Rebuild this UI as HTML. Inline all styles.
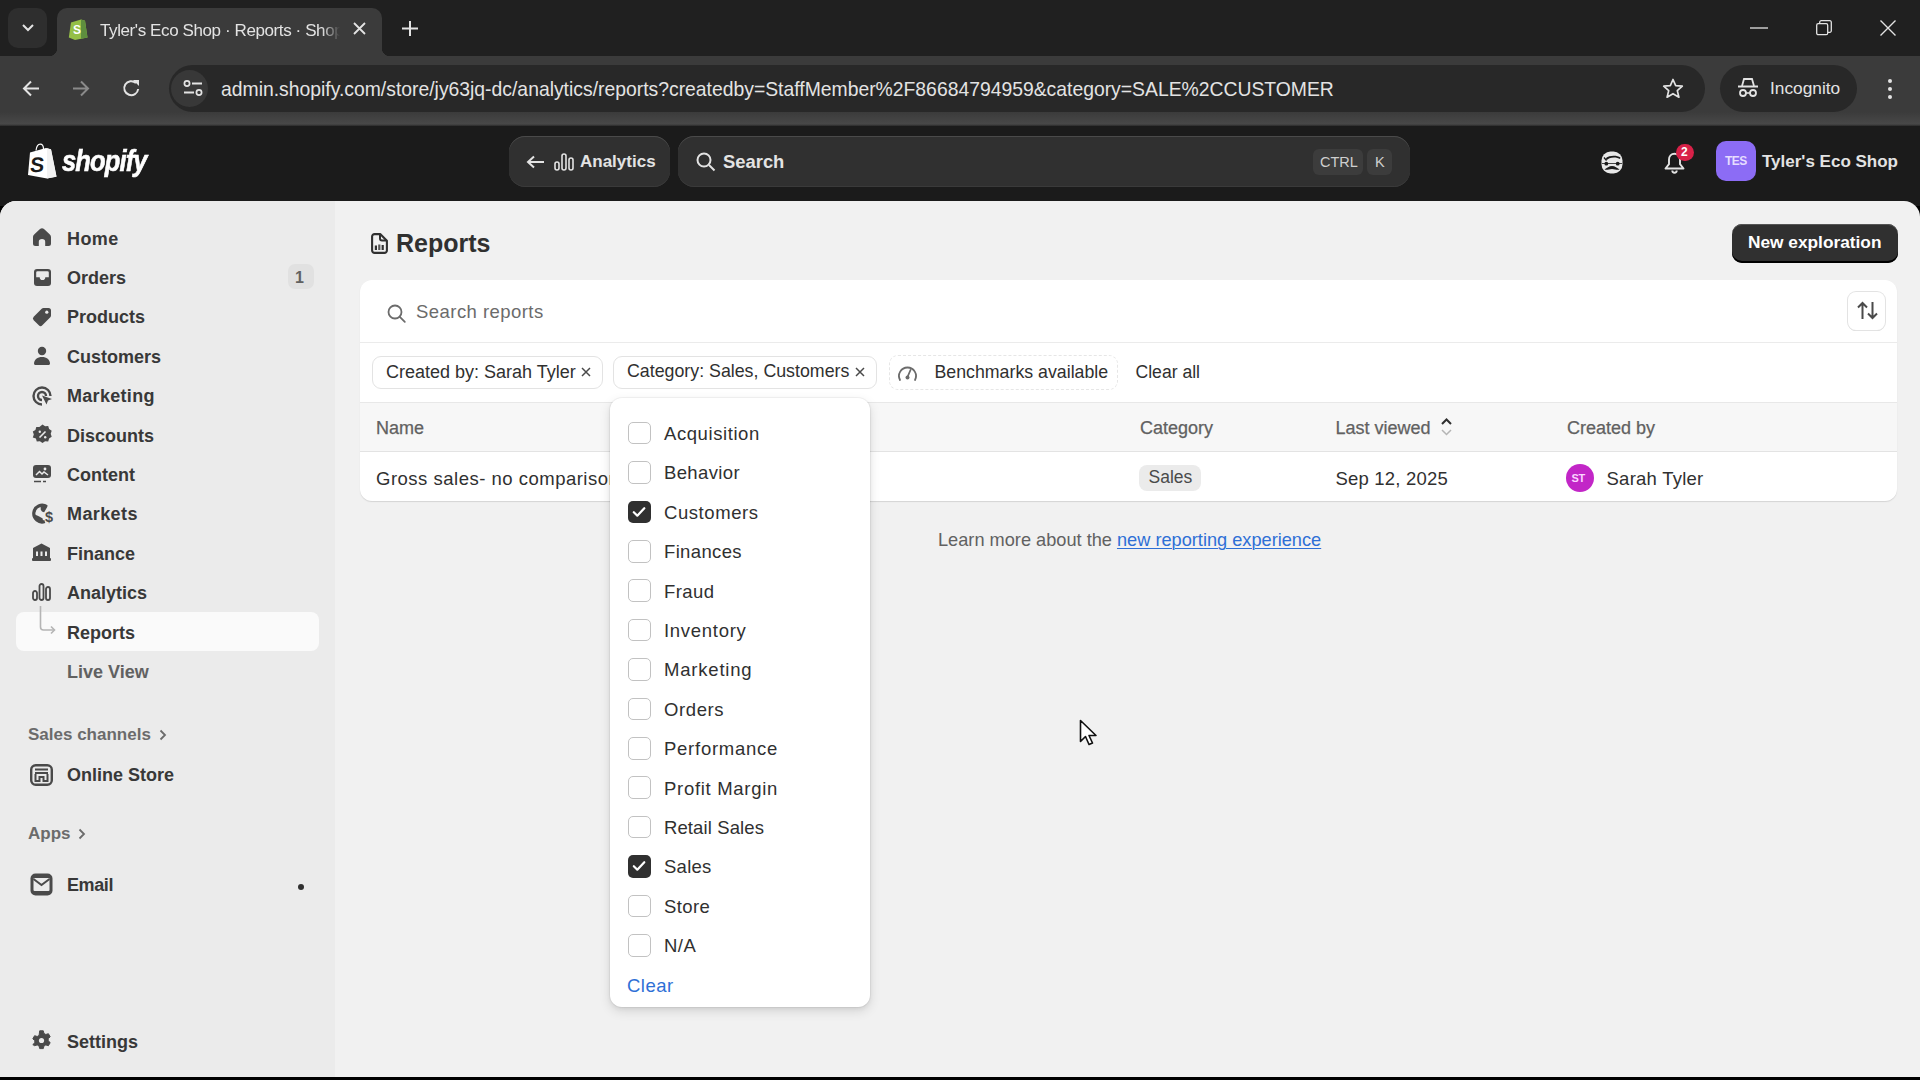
<!DOCTYPE html>
<html><head><meta charset="utf-8">
<style>
*{box-sizing:border-box;margin:0;padding:0}
html,body{width:1920px;height:1080px;overflow:hidden;background:#000;font-family:"Liberation Sans",sans-serif}
.a{position:absolute}
.t{position:absolute;white-space:nowrap;line-height:1}
svg{position:absolute;overflow:visible}
#tabstrip{left:0;top:0;width:1920px;height:56px;background:#202020}
#toolbar{left:0;top:56px;width:1920px;height:70px;background:linear-gradient(#3b3b3b 0,#3b3b3b 56px,#484848 68px,#2a2a2a 70px)}
#shdr{left:0;top:126px;width:1920px;height:80px;background:#1b1b1b}
#main{left:0;top:201px;width:1920px;height:876px;background:#f1f1f1;border-radius:16px 16px 0 0;overflow:hidden}
.nav{font-size:18px;font-weight:700;color:#383838}
.cw{color:#e3e3e3}
</style></head><body>
<!-- ============ Chrome tab strip ============ -->
<div id="tabstrip" class="a"></div>
<div class="a" style="left:8px;top:8px;width:39px;height:40px;border-radius:10px;background:#2e2e2e"></div>
<svg style="left:20px;top:22px" width="16" height="12" viewBox="0 0 16 12"><path d="M3 3l5 5 5-5" fill="none" stroke="#e3e3e3" stroke-width="2"/></svg>
<!-- active tab -->
<div class="a" style="left:57px;top:8px;width:325px;height:50px;background:#3b3b3b;border-radius:10px 10px 0 0"></div>
<div class="a" style="left:49px;top:48px;width:8px;height:8px;background:radial-gradient(circle at 0 0,transparent 8px,#3b3b3b 8.5px)"></div>
<div class="a" style="left:382px;top:48px;width:8px;height:8px;background:radial-gradient(circle at 8px 0,transparent 8px,#3b3b3b 8.5px)"></div>
<svg style="left:68px;top:17px" width="20" height="23" viewBox="0 0 20 23"><path d="M3 5.5l10-3 4 1.2 2.5 16.8-12.5 2.5L.8 20.5z" fill="#95bf47"/><path d="M13 2.5l4 1.2 2.5 16.8-6.5 1.3z" fill="#5e8e3e"/><text x="5" y="17" font-family="Liberation Sans" font-weight="700" font-size="12" fill="#fff">S</text></svg>
<div class="t cw" style="left:100px;top:21.5px;font-size:17px;letter-spacing:-0.4px;width:240px;overflow:hidden;-webkit-mask-image:linear-gradient(90deg,#000 222px,transparent 240px)">Tyler's Eco Shop · Reports · Shopify</div>
<svg style="left:353px;top:22px" width="13" height="13" viewBox="0 0 13 13"><path d="M1 1l11 11M12 1L1 12" stroke="#e3e3e3" stroke-width="1.8"/></svg>
<svg style="left:402px;top:21px" width="16" height="15" viewBox="0 0 16 15"><path d="M8 0v15M0 7.5h16" stroke="#e3e3e3" stroke-width="2"/></svg>
<!-- window controls -->
<svg style="left:1750px;top:27px" width="18" height="2" viewBox="0 0 18 2"><path d="M0 1h18" stroke="#e3e3e3" stroke-width="1.3"/></svg>
<svg style="left:1816px;top:20px" width="16" height="16" viewBox="0 0 16 16"><rect x="0.7" y="3.7" width="11" height="11" rx="1.5" fill="none" stroke="#e3e3e3" stroke-width="1.3"/><path d="M3.7 3.7V2.2a1.5 1.5 0 0 1 1.5-1.5h8.6a1.5 1.5 0 0 1 1.5 1.5v8.6a1.5 1.5 0 0 1-1.5 1.5h-2" fill="none" stroke="#e3e3e3" stroke-width="1.3"/></svg>
<svg style="left:1880px;top:20px" width="16" height="16" viewBox="0 0 16 16"><path d="M.5 .5l15 15M15.5 .5l-15 15" stroke="#e3e3e3" stroke-width="1.4"/></svg>

<!-- ============ Chrome toolbar ============ -->
<div id="toolbar" class="a"></div>
<svg style="left:22px;top:80px" width="18" height="17" viewBox="0 0 18 17"><path d="M17 8.5H2.5M9 1.5l-7 7 7 7" fill="none" stroke="#e3e3e3" stroke-width="2"/></svg>
<svg style="left:72px;top:80px" width="18" height="17" viewBox="0 0 18 17"><path d="M1 8.5h14.5M9 1.5l7 7-7 7" fill="none" stroke="#8a8a8a" stroke-width="2"/></svg>
<svg style="left:122px;top:79px" width="19" height="19" viewBox="0 0 19 19"><path d="M16.2 10a7 7 0 1 1-2.2-6" fill="none" stroke="#e3e3e3" stroke-width="2"/><path d="M11 1h6v6z" fill="#e3e3e3"/></svg>
<!-- address bar -->
<div class="a" style="left:169px;top:65px;width:1536px;height:47px;border-radius:23.5px;background:#282828"></div>
<div class="a" style="left:171px;top:70px;width:37px;height:37px;border-radius:18.5px;background:#383838"></div>
<svg style="left:182.5px;top:80px" width="20" height="18" viewBox="0 0 20 18"><circle cx="4" cy="3.5" r="2.6" fill="none" stroke="#e3e3e3" stroke-width="1.7"/><path d="M9 3.5h10M1 12.5h10" stroke="#e3e3e3" stroke-width="1.8"/><circle cx="16" cy="12.5" r="2.6" fill="none" stroke="#e3e3e3" stroke-width="1.7"/></svg>
<div class="t cw" style="left:221px;top:80px;font-size:19.35px">admin.shopify.com/store/jy63jq-dc/analytics/reports?createdby=StaffMember%2F86684794959&amp;category=SALE%2CCUSTOMER</div>
<svg style="left:1662px;top:78px" width="22" height="21" viewBox="0 0 22 21"><path d="M11 1.5l2.7 6.2 6.6.5-5 4.4 1.6 6.6L11 15.7l-5.9 3.5 1.6-6.6-5-4.4 6.6-.5z" fill="none" stroke="#e3e3e3" stroke-width="1.7" stroke-linejoin="round"/></svg>
<div class="a" style="left:1720px;top:65px;width:137px;height:47px;border-radius:23.5px;background:#282828"></div>
<svg style="left:1737px;top:78px" width="22" height="20" viewBox="0 0 22 20"><path d="M5 8l2-7h8l2 7" fill="none" stroke="#e3e3e3" stroke-width="1.8"/><path d="M1 8.5h20" stroke="#e3e3e3" stroke-width="2"/><circle cx="6" cy="15" r="3" fill="none" stroke="#e3e3e3" stroke-width="1.8"/><circle cx="16" cy="15" r="3" fill="none" stroke="#e3e3e3" stroke-width="1.8"/><path d="M9 15h4" stroke="#e3e3e3" stroke-width="1.6"/></svg>
<div class="t cw" style="left:1770px;top:80px;font-size:17.3px">Incognito</div>
<svg style="left:1887px;top:79px" width="6" height="20" viewBox="0 0 6 20"><circle cx="3" cy="2" r="2" fill="#e3e3e3"/><circle cx="3" cy="10" r="2" fill="#e3e3e3"/><circle cx="3" cy="18" r="2" fill="#e3e3e3"/></svg>

<!-- ============ Shopify header ============ -->
<div id="shdr" class="a"></div>
<svg style="left:28px;top:143px" width="30" height="36" viewBox="0 0 30 36"><path d="M2 9.5l16-4.5 5 1.2 5.5 27.3L19 35.5 0 32z" fill="#fff"/><path d="M19 5.2l4 1.2 5.5 27.3L19 35.5z" fill="#f2f2f2"/><path d="M8 7.5C8.5 3.5 10 1.2 12.2 1.2s3.3 2.3 3.3 5" fill="none" stroke="#fff" stroke-width="1.2"/><text x="4.5" y="29.5" font-family="Liberation Sans" font-weight="700" font-size="21" fill="#1a1a1a" transform="skewX(-6)">S</text></svg>
<div class="t" style="left:62px;top:146.5px;font-size:29px;font-weight:700;font-style:italic;letter-spacing:-1px;color:#fff;-webkit-text-stroke:0.6px #fff;transform:scaleX(0.88);transform-origin:0 0">shopify</div>
<div class="a" style="left:509px;top:136px;width:161px;height:51px;border-radius:16px;background:#303030;box-shadow:inset 0 1px 0 #4a4a4a, inset 0 -1px 0 #3a3a3a"></div>
<svg style="left:526px;top:155px" width="19" height="14" viewBox="0 0 19 14"><path d="M18 7H2.5M8 1.5L2 7l6 5.5" fill="none" stroke="#e3e3e3" stroke-width="2"/></svg>
<svg style="left:554px;top:153px" width="20" height="18" viewBox="0 0 20 18"><rect x="1" y="9" width="4" height="8" rx="2" fill="none" stroke="#e3e3e3" stroke-width="1.6"/><rect x="8" y="1" width="4" height="16" rx="2" fill="none" stroke="#e3e3e3" stroke-width="1.6"/><rect x="15" y="5" width="4" height="12" rx="2" fill="none" stroke="#e3e3e3" stroke-width="1.6"/></svg>
<div class="t cw" style="left:580px;top:153px;font-size:17px;font-weight:700">Analytics</div>
<div class="a" style="left:678px;top:136px;width:732px;height:51px;border-radius:16px;background:#303030;box-shadow:inset 0 1px 0 #4a4a4a, inset 0 -1px 0 #3a3a3a"></div>
<svg style="left:696px;top:152px" width="20" height="20" viewBox="0 0 20 20"><circle cx="8" cy="8" r="6.5" fill="none" stroke="#e3e3e3" stroke-width="2"/><path d="M13 13l5.5 5.5" stroke="#e3e3e3" stroke-width="2"/></svg>
<div class="t cw" style="left:723px;top:152.5px;font-size:18.4px;font-weight:700">Search</div>
<div class="a" style="left:1313px;top:149px;width:50px;height:26px;border-radius:6px;background:#3c3c3c"></div>
<div class="t" style="left:1320px;top:155px;font-size:14.5px;color:#cfcfcf">CTRL</div>
<div class="a" style="left:1367px;top:149px;width:25px;height:26px;border-radius:6px;background:#3c3c3c"></div>
<div class="t" style="left:1375px;top:155px;font-size:14.5px;color:#cfcfcf">K</div>
<!-- face icon -->
<svg style="left:1601px;top:150.5px" width="22" height="23" viewBox="0 0 22 23"><rect x="0.5" y="0.5" width="21" height="22" rx="9" fill="#e8e8e8"/><path d="M5.5 9.5c2-3.5 10-4 13.5-1.5l.5-1.5c-3.5-2.5-11-2.5-14.5.5z" fill="#1b1b1b"/><path d="M3 6.5l2.5 3" stroke="#1b1b1b" stroke-width="1.3"/><path d="M1 12.5h20" stroke="#1b1b1b" stroke-width="0.8"/><circle cx="5.3" cy="12.7" r="1.9" fill="#1b1b1b"/><circle cx="16.7" cy="12.7" r="1.9" fill="#1b1b1b"/><path d="M3.5 18.5c2.5-1.5 4.5-3.5 7.5-3.5s5 2 7.5 3.5c-2.5 1-4.5-.5-7.5-.5s-5 1.5-7.5.5z" fill="#1b1b1b"/></svg>
<!-- bell -->
<svg style="left:1664px;top:151.5px" width="21" height="22" viewBox="0 0 21 22"><path d="M10.5 1.8c-3.2 0-5.5 2.6-5.5 5.8v4.6L1.5 16.5h18L16 12.2V7.6c0-3.2-2.3-5.8-5.5-5.8z" fill="none" stroke="#e3e3e3" stroke-width="1.9" stroke-linejoin="round"/><path d="M8.3 18.5a2.2 2.2 0 0 0 4.4 0" fill="none" stroke="#e3e3e3" stroke-width="1.9"/></svg>
<div class="a" style="left:1676px;top:143.5px;width:17.5px;height:17.5px;border-radius:9px;background:#d82148"></div>
<div class="t" style="left:1681px;top:146px;font-size:12px;font-weight:700;color:#fff">2</div>
<div class="a" style="left:1716px;top:141px;width:40px;height:40px;border-radius:10px;background:#8c6cf5"></div>
<div class="t" style="left:1725px;top:155px;font-size:12px;font-weight:700;letter-spacing:-0.5px;color:#e6ddff">TES</div>
<div class="t cw" style="left:1762px;top:153px;font-size:17px;font-weight:700">Tyler's Eco Shop</div>

<!-- ============ Main ============ -->
<div id="main" class="a">
  <div class="a" style="left:0;top:0;width:335px;height:876px;background:#ebebeb"></div>
</div>

<!-- ============ Sidebar ============ -->
<div class="a" style="left:16px;top:612px;width:303px;height:39px;border-radius:8px;background:#fafafa"></div>
<!-- home -->
<svg style="left:33px;top:228px" width="18" height="18" viewBox="0 0 18 18"><path d="M7 1.1a2.9 2.9 0 0 1 4 0l5.6 5.2c.9.8 1.4 1.8 1.4 3v6.2a2.5 2.5 0 0 1-2.5 2.5h-3.3v-4.2a3.2 2.8 0 0 0-6.4 0v4.2H2.5A2.5 2.5 0 0 1 0 15.5V9.3c0-1.2.5-2.2 1.4-3z" fill="#4a4a4a"/></svg>
<!-- orders -->
<svg style="left:32.5px;top:267.5px" width="19" height="19" viewBox="0 0 19 19"><path d="M4 1h11a3 3 0 0 1 3 3v11a3 3 0 0 1-3 3H4a3 3 0 0 1-3-3V4a3 3 0 0 1 3-3z" fill="#4a4a4a"/><path d="M4.5 3.3h10a1.3 1.3 0 0 1 1.3 1.3v4.6h-3.5a2.8 2.8 0 0 1-5.6 0H3.2V4.6a1.3 1.3 0 0 1 1.3-1.3z" fill="#ebebeb"/></svg>
<!-- products -->
<svg style="left:32px;top:307px" width="20" height="20" viewBox="0 0 20 20"><path d="M11.5 1h5a2.5 2.5 0 0 1 2.5 2.5v5c0 .7-.3 1.3-.7 1.8l-8 8a2.5 2.5 0 0 1-3.5 0l-5.1-5.1a2.5 2.5 0 0 1 0-3.5l8-8c.5-.4 1.1-.7 1.8-.7z" fill="#4a4a4a"/><circle cx="14.8" cy="5.2" r="1.6" fill="#ebebeb"/></svg>
<!-- customers -->
<svg style="left:33px;top:346px" width="18" height="20" viewBox="0 0 18 20"><circle cx="9" cy="5" r="4.2" fill="#4a4a4a"/><path d="M1 17.5c0-3.8 3.5-6.5 8-6.5s8 2.7 8 6.5c0 .9-.6 1.5-1.5 1.5h-13C1.6 19 1 18.4 1 17.5z" fill="#4a4a4a"/></svg>
<!-- marketing -->
<svg style="left:32px;top:386px" width="21" height="21" viewBox="0 0 21 21"><path d="M10 18.5A8.5 8.5 0 1 1 18.5 10" fill="none" stroke="#4a4a4a" stroke-width="2.4"/><path d="M10 14a4 4 0 1 1 4-4" fill="none" stroke="#4a4a4a" stroke-width="2.4"/><path d="M10 9.5l10 3.5-4 1.5-1.5 4z" fill="#4a4a4a"/></svg>
<!-- discounts -->
<svg style="left:31.5px;top:424px" width="21" height="21" viewBox="0 0 21 21"><path d="M10.5 .5l2.6 1.8 3.1-.2.9 3 2.6 1.7-1 3 1 3-2.6 1.7-.9 3-3.1-.2-2.6 1.8-2.6-1.8-3.1.2-.9-3L.8 13.6l1-3-1-3 2.6-1.7.9-3 3.1.2z" fill="#4a4a4a"/><path d="M7.5 13.5l6-6" stroke="#ebebeb" stroke-width="1.6"/><circle cx="7.8" cy="7.8" r="1.2" fill="#ebebeb"/><circle cx="13.2" cy="13.2" r="1.2" fill="#ebebeb"/></svg>
<!-- content -->
<svg style="left:32px;top:464px" width="20" height="19" viewBox="0 0 20 19"><rect x="1" y="1" width="18" height="13" rx="3" fill="#4a4a4a"/><path d="M4 11l3.5-3.5 2.5 2.5 2-2 4 3" fill="none" stroke="#ebebeb" stroke-width="1.5"/><circle cx="13" cy="5" r="1.4" fill="#ebebeb"/><path d="M2 17.5h7M11 17.5h3" stroke="#4a4a4a" stroke-width="1.6"/></svg>
<!-- markets -->
<svg style="left:32px;top:503px" width="21" height="21" viewBox="0 0 21 21"><path d="M14.8 3.6A8.4 8.4 0 1 0 12.8 18.6" fill="none" stroke="#4a4a4a" stroke-width="3.2"/><path d="M8.5 2C11 1 14.5 1.5 15.5 3.5L12.2 9.2C10.6 9.2 9.2 8 8.8 6.2z" fill="#4a4a4a"/><path d="M2.5 11.5C3 15.5 6.5 19 11.5 19.5L10.5 15.2C8.5 14.5 6.5 12.5 2.5 11.5z" fill="#4a4a4a"/><text x="13" y="18.8" font-family="Liberation Sans" font-weight="700" font-size="14.5" fill="#4a4a4a">$</text></svg>
<!-- finance -->
<svg style="left:32px;top:543px" width="19" height="18" viewBox="0 0 19 18"><path d="M9.5 .5l8.5 4.5v2.2H1V5z" fill="#4a4a4a"/><rect x="1" y="7" width="17" height="8" fill="#4a4a4a"/><rect x="4" y="8.5" width="2" height="4.5" fill="#ebebeb"/><rect x="8.5" y="8.5" width="2" height="4.5" fill="#ebebeb"/><rect x="13" y="8.5" width="2" height="4.5" fill="#ebebeb"/><rect x="0" y="15" width="19" height="3" rx="1" fill="#4a4a4a"/></svg>
<!-- analytics -->
<svg style="left:32px;top:583px" width="19" height="18" viewBox="0 0 19 18"><rect x="1" y="8" width="4" height="9" rx="2" fill="none" stroke="#4a4a4a" stroke-width="1.8"/><rect x="7.5" y="1" width="4" height="16" rx="2" fill="none" stroke="#4a4a4a" stroke-width="1.8"/><rect x="14" y="4" width="4" height="13" rx="2" fill="none" stroke="#4a4a4a" stroke-width="1.8"/></svg>
<svg style="left:39px;top:606px" width="20" height="30" viewBox="0 0 20 30"><path d="M1.5 0v21a3 3 0 0 0 3 3H15" fill="none" stroke="#b5b5b5" stroke-width="1.6"/><path d="M12 20.5l3.5 3.5-3.5 3.5" fill="none" stroke="#b5b5b5" stroke-width="1.6"/></svg>
<div class="t nav" style="left:67px;top:229.5px;letter-spacing:0.4px">Home</div>
<div class="t nav" style="left:67px;top:268.9px">Orders</div>
<div class="a" style="left:288px;top:264px;width:26px;height:24.5px;border-radius:7px;background:#e1e1e1"></div>
<div class="t" style="left:295px;top:270px;font-size:16px;font-weight:700;color:#616161">1</div>
<div class="t nav" style="left:67px;top:308.3px">Products</div>
<div class="t nav" style="left:67px;top:347.7px">Customers</div>
<div class="t nav" style="left:67px;top:387.1px;letter-spacing:0.3px">Marketing</div>
<div class="t nav" style="left:67px;top:426.5px">Discounts</div>
<div class="t nav" style="left:67px;top:465.9px">Content</div>
<div class="t nav" style="left:67px;top:505.3px;letter-spacing:0.4px">Markets</div>
<div class="t nav" style="left:67px;top:544.7px">Finance</div>
<div class="t nav" style="left:67px;top:584.1px">Analytics</div>
<div class="t nav" style="left:67px;top:623.5px">Reports</div>
<div class="t nav" style="left:67px;top:662.9px;color:#616161">Live View</div>
<div class="t" style="left:28px;top:726.3px;font-size:17px;font-weight:700;color:#6b6b6b">Sales channels</div>
<svg style="left:159px;top:729px" width="8" height="12" viewBox="0 0 8 12"><path d="M1.5 1.5L6 6l-4.5 4.5" fill="none" stroke="#6b6b6b" stroke-width="1.8"/></svg>
<svg style="left:30px;top:764px" width="23" height="22" viewBox="0 0 23 22"><rect x="1.2" y="1.2" width="20.6" height="19.6" rx="4.5" fill="none" stroke="#4a4a4a" stroke-width="2.4"/><path d="M5 5.5h13M5 9h13" stroke="#4a4a4a" stroke-width="2"/><path d="M5.5 10v7h4v-4h4v4h4v-7" fill="none" stroke="#4a4a4a" stroke-width="2"/></svg>
<div class="t nav" style="left:67px;top:766.3px">Online Store</div>
<div class="t" style="left:28px;top:825.1px;font-size:17px;font-weight:700;color:#6b6b6b">Apps</div>
<svg style="left:78px;top:828px" width="8" height="12" viewBox="0 0 8 12"><path d="M1.5 1.5L6 6l-4.5 4.5" fill="none" stroke="#6b6b6b" stroke-width="1.8"/></svg>
<svg style="left:30px;top:873px" width="23" height="23" viewBox="0 0 23 23"><rect x="0.5" y="0.5" width="22" height="22" rx="5" fill="#4a4a4a"/><rect x="3.5" y="5" width="16" height="13" rx="1" fill="#ebebeb"/><path d="M3.5 6l8 6 8-6" fill="none" stroke="#4a4a4a" stroke-width="2"/></svg>
<div class="t nav" style="left:67px;top:876.1px;letter-spacing:-0.4px">Email</div>
<div class="a" style="left:297.5px;top:883.5px;width:6px;height:6px;border-radius:3px;background:#303030"></div>
<svg style="left:31px;top:1030px" width="21" height="21" viewBox="0 0 21 21"><path d="M8.7 .8h3.6l.6 2.6 1.9 1.1 2.6-.8 1.8 3.1-2 1.8v2.2l2 1.8-1.8 3.1-2.6-.8-1.9 1.1-.6 2.6H8.7l-.6-2.6-1.9-1.1-2.6.8L1.8 14.6l2-1.8v-2.2l-2-1.8 1.8-3.1 2.6.8 1.9-1.1z" fill="#4a4a4a" stroke="#4a4a4a" stroke-width="1" stroke-linejoin="round"/><circle cx="10.5" cy="10.5" r="2.6" fill="#ebebeb"/></svg>
<div class="t nav" style="left:67px;top:1032.7px">Settings</div>

<!-- ============ Main content ============ -->
<svg style="left:371px;top:232.5px" width="17" height="21" viewBox="0 0 17 21"><path d="M3.6 1.1h5.6l6.7 6.7v9.6a2.5 2.5 0 0 1-2.5 2.5H3.6a2.5 2.5 0 0 1-2.5-2.5V3.6a2.5 2.5 0 0 1 2.5-2.5z" fill="none" stroke="#303030" stroke-width="2.1" stroke-linejoin="round"/><path d="M9 1.5v4a2 2 0 0 0 2 2h4.5" fill="none" stroke="#303030" stroke-width="2"/><rect x="3.8" y="12.5" width="2.2" height="4.5" fill="#303030"/><rect x="7.2" y="11.5" width="2.2" height="5.5" fill="#555"/><rect x="10.6" y="12" width="2.2" height="5" fill="#303030"/></svg>
<div class="t" style="left:396px;top:230.5px;font-size:25px;font-weight:700;color:#303030">Reports</div>
<div class="a" style="left:1732px;top:224px;width:166px;height:39px;border-radius:10px;background:#303030;box-shadow:inset 0 1px 0 #555, inset 0 -2px 0 #000"></div>
<div class="t" style="left:1748px;top:234px;font-size:17.3px;font-weight:700;color:#fff">New exploration</div>

<!-- card -->
<div class="a" style="left:360px;top:280px;width:1537px;height:221px;border-radius:12px;background:#fff;box-shadow:0 1px 0 rgba(26,26,26,.07),0 1px 2px rgba(0,0,0,.06)"></div>
<div class="a" style="left:360px;top:342px;width:1537px;height:1px;background:#ebebeb"></div>
<svg style="left:387px;top:304px" width="19" height="19" viewBox="0 0 19 19"><circle cx="8" cy="8" r="6.5" fill="none" stroke="#6b6b6b" stroke-width="1.8"/><path d="M12.8 12.8l5 5" stroke="#6b6b6b" stroke-width="1.8" stroke-linecap="round"/></svg>
<div class="t" style="left:416px;top:303.3px;font-size:18.5px;letter-spacing:0.45px;color:#6b6b6b">Search reports</div>
<div class="a" style="left:1848px;top:292px;width:37px;height:38px;border-radius:8px;background:#fff;box-shadow:0 0 0 1px #e3e3e3, 0 1px 0 #d4d4d4"></div>
<svg style="left:1857px;top:301px" width="21" height="19" viewBox="0 0 21 19"><path d="M5.5 18V2M1 6.5l4.5-4.5L10 6.5" fill="none" stroke="#4a4a4a" stroke-width="2"/><path d="M15.5 1v16M11 12.5l4.5 4.5 4.5-4.5" fill="none" stroke="#4a4a4a" stroke-width="2"/></svg>

<!-- filter pills -->
<div class="a" style="left:372px;top:355.5px;width:231px;height:33.5px;border-radius:9px;border:1px solid #e3e3e3;background:#fff"></div>
<div class="t" style="left:386px;top:363.3px;font-size:18px;color:#303030">Created by: Sarah Tyler</div>
<svg style="left:581px;top:367px" width="10" height="10" viewBox="0 0 10 10"><path d="M1 1l8 8M9 1L1 9" stroke="#4a4a4a" stroke-width="1.5"/></svg>
<div class="a" style="left:613px;top:355.5px;width:264px;height:33.5px;border-radius:9px;border:1px solid #e3e3e3;background:#fff"></div>
<div class="t" style="left:627px;top:363.3px;font-size:17.8px;color:#303030">Category: Sales, Customers</div>
<svg style="left:855px;top:367px" width="10" height="10" viewBox="0 0 10 10"><path d="M1 1l8 8M9 1L1 9" stroke="#4a4a4a" stroke-width="1.5"/></svg>
<div class="a" style="left:889px;top:355px;width:229px;height:34.5px;border-radius:9px;border:1px dashed #e6e6e6;background:#fff"></div>
<svg style="left:897px;top:364px" width="21" height="17" viewBox="0 0 21 17"><path d="M3 16A8.5 8.5 0 1 1 18 16" fill="none" stroke="#6b6b6b" stroke-width="1.8" stroke-linecap="round"/><path d="M10.5 13l3-7" stroke="#6b6b6b" stroke-width="1.8" stroke-linecap="round"/><circle cx="10.5" cy="13.5" r="2" fill="#6b6b6b"/></svg>
<div class="t" style="left:934.5px;top:363.5px;font-size:17.75px;color:#303030">Benchmarks available</div>
<div class="t" style="left:1135.5px;top:363.5px;font-size:17.6px;color:#303030">Clear all</div>

<!-- table header -->
<div class="a" style="left:360px;top:402px;width:1537px;height:50px;background:#f7f7f7;border-top:1px solid #e8e8e8;border-bottom:1px solid #e3e3e3"></div>
<div class="t" style="left:376px;top:418.6px;font-size:18px;color:#616161;-webkit-text-stroke:0.25px #616161">Name</div>
<div class="t" style="left:1140px;top:418.6px;font-size:18px;color:#616161;-webkit-text-stroke:0.25px #616161">Category</div>
<div class="t" style="left:1335.5px;top:418.6px;font-size:18px;color:#616161;-webkit-text-stroke:0.25px #616161">Last viewed</div>
<svg style="left:1440px;top:418px" width="13" height="18" viewBox="0 0 13 18"><path d="M2 6l4.5-4.5L11 6" fill="none" stroke="#303030" stroke-width="2"/><path d="M2 12l4.5 4.5L11 12" fill="none" stroke="#b5b5b5" stroke-width="1.5"/></svg>
<div class="t" style="left:1567px;top:418.6px;font-size:18px;color:#616161;-webkit-text-stroke:0.25px #616161">Created by</div>

<!-- row -->
<div class="t" style="left:376px;top:469.7px;font-size:18.5px;letter-spacing:0.5px;color:#303030">Gross sales- no comparison</div>
<div class="a" style="left:1139px;top:465px;width:62px;height:26px;border-radius:8px;background:#ebebeb"></div>
<div class="t" style="left:1148.5px;top:469.2px;font-size:17.5px;color:#4a4a4a">Sales</div>
<div class="t" style="left:1335.5px;top:469.7px;font-size:18.5px;letter-spacing:0.2px;color:#303030">Sep 12, 2025</div>
<div class="a" style="left:1566px;top:464px;width:28px;height:28px;border-radius:14px;background:#c226c7"></div>
<div class="t" style="left:1571.5px;top:473px;font-size:11px;font-weight:700;letter-spacing:-0.3px;color:#fbd4ff">ST</div>
<div class="t" style="left:1606.5px;top:469.7px;font-size:18.5px;letter-spacing:0.25px;color:#303030">Sarah Tyler</div>

<div class="t" style="left:938px;top:531.2px;font-size:18.2px;color:#616161">Learn more about the <span style="color:#2e6fd6;text-decoration:underline;text-decoration-thickness:1px;text-underline-offset:2px">new reporting experience</span></div>

<div class="a" style="left:610px;top:398px;width:260px;height:609px;border-radius:12px;background:#fff;box-shadow:0 0 0 1px rgba(0,0,0,.04),0 4px 12px rgba(0,0,0,.12),0 2px 4px rgba(0,0,0,.06)"></div>
<div class="a" style="left:628px;top:421.8px;width:22.5px;height:22.5px;border-radius:5px;border:1.4px solid #c2c2c2;background:#fff"></div>
<div class="t" style="left:664px;top:425.0px;font-size:18.5px;letter-spacing:0.58px;color:#303030">Acquisition</div>
<div class="a" style="left:628px;top:461.2px;width:22.5px;height:22.5px;border-radius:5px;border:1.4px solid #c2c2c2;background:#fff"></div>
<div class="t" style="left:664px;top:464.4px;font-size:18.5px;letter-spacing:0.37px;color:#303030">Behavior</div>
<div class="a" style="left:628px;top:500.6px;width:22.5px;height:22.5px;border-radius:5px;background:#303030"></div>
<svg style="left:632px;top:505.6px" width="14" height="12" viewBox="0 0 14 12"><path d="M1.8 6.2l3.5 3.5 7-7.5" fill="none" stroke="#fff" stroke-width="2.2" stroke-linecap="round" stroke-linejoin="round"/></svg>
<div class="t" style="left:664px;top:503.8px;font-size:18.5px;letter-spacing:0.575px;color:#303030">Customers</div>
<div class="a" style="left:628px;top:540.0px;width:22.5px;height:22.5px;border-radius:5px;border:1.4px solid #c2c2c2;background:#fff"></div>
<div class="t" style="left:664px;top:543.2px;font-size:18.5px;letter-spacing:0.357px;color:#303030">Finances</div>
<div class="a" style="left:628px;top:579.4px;width:22.5px;height:22.5px;border-radius:5px;border:1.4px solid #c2c2c2;background:#fff"></div>
<div class="t" style="left:664px;top:582.6px;font-size:18.5px;letter-spacing:0.45px;color:#303030">Fraud</div>
<div class="a" style="left:628px;top:618.8px;width:22.5px;height:22.5px;border-radius:5px;border:1.4px solid #c2c2c2;background:#fff"></div>
<div class="t" style="left:664px;top:622.0px;font-size:18.5px;letter-spacing:0.71px;color:#303030">Inventory</div>
<div class="a" style="left:628px;top:658.2px;width:22.5px;height:22.5px;border-radius:5px;border:1.4px solid #c2c2c2;background:#fff"></div>
<div class="t" style="left:664px;top:661.4px;font-size:18.5px;letter-spacing:0.8px;color:#303030">Marketing</div>
<div class="a" style="left:628px;top:697.6px;width:22.5px;height:22.5px;border-radius:5px;border:1.4px solid #c2c2c2;background:#fff"></div>
<div class="t" style="left:664px;top:700.8px;font-size:18.5px;letter-spacing:0.6px;color:#303030">Orders</div>
<div class="a" style="left:628px;top:737.0px;width:22.5px;height:22.5px;border-radius:5px;border:1.4px solid #c2c2c2;background:#fff"></div>
<div class="t" style="left:664px;top:740.2px;font-size:18.5px;letter-spacing:0.74px;color:#303030">Performance</div>
<div class="a" style="left:628px;top:776.4px;width:22.5px;height:22.5px;border-radius:5px;border:1.4px solid #c2c2c2;background:#fff"></div>
<div class="t" style="left:664px;top:779.6px;font-size:18.5px;letter-spacing:0.7px;color:#303030">Profit Margin</div>
<div class="a" style="left:628px;top:815.8px;width:22.5px;height:22.5px;border-radius:5px;border:1.4px solid #c2c2c2;background:#fff"></div>
<div class="t" style="left:664px;top:819.0px;font-size:18.5px;letter-spacing:0.11px;color:#303030">Retail Sales</div>
<div class="a" style="left:628px;top:855.2px;width:22.5px;height:22.5px;border-radius:5px;background:#303030"></div>
<svg style="left:632px;top:860.2px" width="14" height="12" viewBox="0 0 14 12"><path d="M1.8 6.2l3.5 3.5 7-7.5" fill="none" stroke="#fff" stroke-width="2.2" stroke-linecap="round" stroke-linejoin="round"/></svg>
<div class="t" style="left:664px;top:858.4px;font-size:18.5px;letter-spacing:0.25px;color:#303030">Sales</div>
<div class="a" style="left:628px;top:894.6px;width:22.5px;height:22.5px;border-radius:5px;border:1.4px solid #c2c2c2;background:#fff"></div>
<div class="t" style="left:664px;top:897.8px;font-size:18.5px;letter-spacing:0.375px;color:#303030">Store</div>
<div class="a" style="left:628px;top:934.0px;width:22.5px;height:22.5px;border-radius:5px;border:1.4px solid #c2c2c2;background:#fff"></div>
<div class="t" style="left:664px;top:937.2px;font-size:18.5px;letter-spacing:0.5px;color:#303030">N/A</div>
<div class="t" style="left:627px;top:977.0px;font-size:18.5px;letter-spacing:0.5px;color:#2e6fd6">Clear</div>

<!-- cursor -->
<svg style="left:1079px;top:719px" width="20" height="28" viewBox="0 0 20 28"><path d="M1.5 1.5v21l5-5 3.5 8 3.5-1.5-3.5-7.5h7z" fill="#fff" stroke="#111" stroke-width="1.6" stroke-linejoin="round"/></svg>

</body></html>
